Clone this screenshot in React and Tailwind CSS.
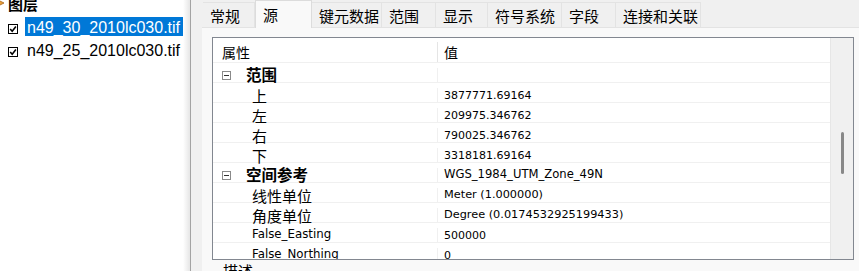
import React from "react";

const cjk = '"Noto Sans CJK SC", "Noto Sans", sans-serif';
const latin = '"DejaVu Sans", "Noto Sans CJK SC", sans-serif';
const ui = '"Liberation Sans", Arial, sans-serif';

const tabs = [
  { name: "常规", w: "w-[52px]" },
  { name: "源", w: "w-[57px]", active: true },
  { name: "键元数据", w: "w-[70px]" },
  { name: "范围", w: "w-[54px]" },
  { name: "显示", w: "w-[52px]" },
  { name: "符号系统", w: "w-[74px]" },
  { name: "字段", w: "w-[54px]" },
  { name: "连接和关联", w: "w-[85px]" },
];

const rows = [
  { group: "范围" },
  { label: "上", value: "3877771.69164", vs: "text-[11px]" },
  { label: "左", value: "209975.346762", vs: "text-[11px]" },
  { label: "右", value: "790025.346762", vs: "text-[11px]" },
  { label: "下", value: "3318181.69164", vs: "text-[11px]" },
  { group: "空间参考", value: "WGS_1984_UTM_Zone_49N", vs: "text-[11.6px]" },
  { label: "线性单位", value: "Meter (1.000000)", vs: "text-[11.3px]" },
  { label: "角度单位", value: "Degree (0.0174532925199433)", vs: "text-[11.3px]" },
  { label: "False_Easting", value: "500000", latin: true, vs: "text-[11px]" },
  { label: "False_Northing", value: "0", latin: true, vs: "text-[11px]" },
];

const Check = () => (
  <svg width="10" height="10" viewBox="0 0 10 10" className="shrink-0 mt-[4px]">
    <rect x="0.5" y="0.5" width="9" height="9" fill="#fff" stroke="#000" />
    <path d="M2.2 5 L4.2 7.2 L7.9 2.6" fill="none" stroke="#000" strokeWidth="1.6" />
  </svg>
);

const Collapse = () => (
  <svg width="9" height="9" viewBox="0 0 9 9" className="shrink-0">
    <rect x="0.5" y="0.5" width="8" height="8" fill="#fff" stroke="#8a8a8a" />
    <path d="M2 4.5 H7" stroke="#333" />
  </svg>
);

const Layer = ({ name, selected }) => (
  <div className="h-[19px] flex items-center pl-[8px] gap-[7px]">
    <Check />
    <span
      className={`h-[19px] flex items-center pl-[2px] pt-[3px] text-[16px] leading-none ${
        selected ? "w-[158px] bg-[#0078d7] text-white" : "text-black"
      }`}
      style={{ fontFamily: ui }}
    >
      {name}
    </span>
  </div>
);

export default function App() {
  return (
    <div className="w-[859px] h-[271px] flex overflow-hidden bg-[#f0f0f0]">
      {/* table of contents */}
      <div className="w-[191px] h-full flex bg-white border-r border-[#a3a3a3]">
        <div className="flex-1 flex flex-col">
          <div className="h-[14px] -mt-[4px] flex items-center gap-[3px]">
            <svg width="5" height="10" viewBox="0 0 5 10" className="shrink-0">
              <path d="M-4 1 L4 5 L-4 9 Z" fill="#e8a33c" stroke="#a8621a" strokeWidth="0.8" />
            </svg>
            <span className="text-[15px] font-bold leading-none text-black" style={{ fontFamily: cjk }}>
              图层
            </span>
          </div>
          <div className="mt-[7px] flex flex-col gap-[4px]">
            <Layer name="n49_30_2010lc030.tif" selected />
            <Layer name="n49_25_2010lc030.tif" />
          </div>
        </div>
        <div className="w-[8px] h-full bg-gradient-to-r from-white to-[#e6e6e6]" />
      </div>

      {/* properties dialog */}
      <div className="flex-1 pl-[11px] flex flex-col">
        <div className="h-[31px] flex items-end" style={{ fontFamily: cjk }}>
          <div className="w-[1px] h-[26px] border-b border-[#e3e3e3]" />
          {tabs.map((t) =>
            t.active ? (
              <div
                key={t.name}
                className={`${t.w} h-[28px] flex items-center pl-[7px] text-[15px] leading-none text-black bg-[#f9f9f9] border border-b-0 border-[#dcdcdc]`}
              >
                {t.name}
              </div>
            ) : (
              <div
                key={t.name}
                className={`${t.w} h-[26px] flex items-center pl-[7px] pt-[1px] text-[15px] leading-none text-black bg-[#f0f0f0] border border-[#e3e3e3] border-l-0 first:border-l`}
              >
                {t.name}
              </div>
            )
          )}
          <div className="flex-1 h-[26px] border-b border-[#e3e3e3]" />
        </div>

        <div className="flex-1 bg-[#f9f9f9] pl-[10px] pt-[9px] flex flex-col">
          <div className="w-[642px] h-[223px] shrink-0 border border-[#828790] bg-white flex">
            <div className="w-[618px] h-full overflow-hidden border-r border-[#e6e6e6]">
              <div className="h-[25px] flex border-b border-[#f0f0f0] pt-[4px]" style={{ fontFamily: cjk }}>
                <div className="w-[224px] pl-[9px] flex items-center text-[14px] leading-none text-black">属性</div>
                <div className="flex-1 pl-[6px] flex items-center text-[14px] leading-none text-black border-l border-[#e5e5e5]">
                  值
                </div>
              </div>
              {rows.map((r, i) => (
                <div key={i} className="h-[20px] flex border-b border-[#f0f0f0] pt-[5px]">
                  {r.group ? (
                    <div className="w-[224px] pl-[9px] flex items-center gap-[15px]">
                      <Collapse />
                      <span className="text-[15.5px] font-bold leading-none text-black" style={{ fontFamily: cjk }}>
                        {r.group}
                      </span>
                    </div>
                  ) : (
                    <div
                      className={`w-[224px] pl-[39px] flex items-center leading-none text-black ${r.latin ? "text-[11.8px]" : "text-[15px]"}`}
                      style={{ fontFamily: r.latin ? latin : cjk }}
                    >
                      {r.label}
                    </div>
                  )}
                  <div
                    className={`flex-1 pl-[6px] flex items-center leading-none text-black border-l border-[#f0f0f0] ${r.vs || "text-[11px]"}`}
                    style={{ fontFamily: latin }}
                  >
                    {r.value}
                  </div>
                </div>
              ))}
            </div>
            <div className="flex-1 bg-[#f0f0f0] flex justify-center pt-[94px]">
              <div className="w-[3px] h-[42px] rounded-full bg-[#888888]" />
            </div>
          </div>
          <div className="mt-[3px] pl-[11px] text-[15px] leading-none text-black" style={{ fontFamily: cjk }}>
            描述
          </div>
        </div>
      </div>
    </div>
  );
}
